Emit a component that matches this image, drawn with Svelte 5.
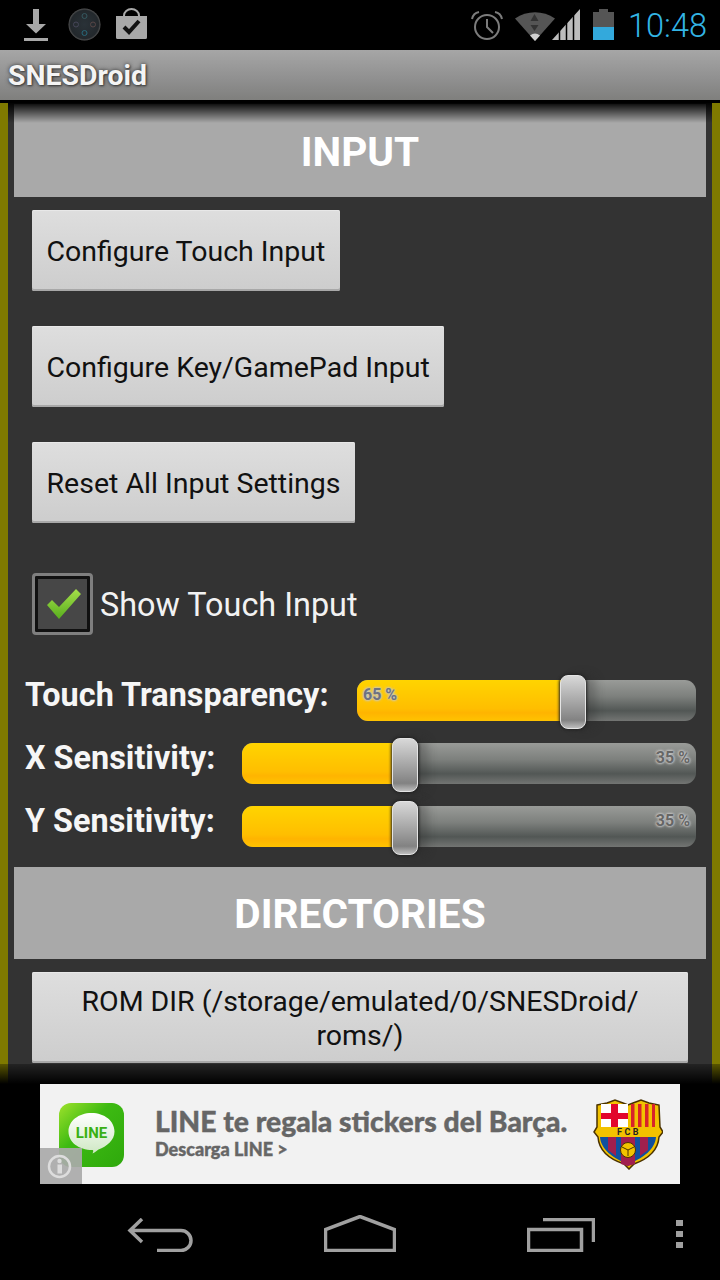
<script>
    const sliders = [
        { label: 'Touch Transparency:', value: 65 },
        { label: 'X Sensitivity:', value: 35 },
        { label: 'Y Sensitivity:', value: 35 }
    ];

    // the thumb travels inside the track, so it stops half a thumb from each end
    const thumbPos = (v) => `calc(13px + (100% - 26px) * ${v / 100})`;
</script>

<div class="screen">
    <header class="status">
        <svg class="ic-download" width="24" height="32" viewBox="0 0 24 32">
            <path d="M9 0h6v15h7l-10 9.500L2 15h7z" fill="#a8a8a8" />
            <rect y="29" width="24" height="3" fill="#a8a8a8" />
        </svg>
        <svg class="ic-pad" width="33" height="33" viewBox="0 0 33 33">
            <defs>
                <radialGradient id="pad" cx="50%" cy="50%" r="50%">
                    <stop offset="0" stop-color="#2a3238" />
                    <stop offset="0.88" stop-color="#23282c" />
                    <stop offset="1" stop-color="#555" />
                </radialGradient>
            </defs>
            <circle cx="16.500" cy="16.500" r="16" fill="url(#pad)" />
            <circle cx="16.500" cy="8" r="2.500" fill="none" stroke="#35585f" />
            <circle cx="16.500" cy="25" r="2.500" fill="none" stroke="#27697a" />
            <circle cx="8" cy="16.500" r="2.500" fill="none" stroke="#464658" />
            <circle cx="25" cy="16.500" r="2.500" fill="none" stroke="#584646" />
        </svg>
        <svg class="ic-bag" width="31" height="31" viewBox="0 0 31 31">
            <path d="M8 9V7.500a7.500 6.500 0 0 1 15 0V9" fill="none" stroke="#a8a8a8" stroke-width="2" />
            <path d="M0 8h31v21.500a1.500 1.500 0 0 1-1.500 1.500h-28A1.500 1.500 0 0 1 0 29.500z" fill="#a8a8a8" />
            <path d="M8 19l5 5 10-11" fill="none" stroke="#111" stroke-width="4" />
        </svg>

        <div class="status-right">
            <svg class="ic-alarm" width="32" height="30" viewBox="0 0 32 30">
                <circle cx="16" cy="17" r="12" fill="none" stroke="#7c7c7c" stroke-width="2" />
                <path d="M16 9v8l6 6" fill="none" stroke="#7c7c7c" stroke-width="2" />
                <path d="M1 9a9 9 0 0 1 7-7M31 9a9 9 0 0 0-7-7" fill="none" stroke="#7c7c7c" stroke-width="2" />
            </svg>
            <svg class="ic-wifi" width="40" height="31" viewBox="0 0 40 31">
                <path d="M0 8.500C12 0 28 0 40 8.500L20 31z" fill="#555" />
                <path d="M15 25.500a8 8 0 0 1 10 0L20 31z" fill="#d0d0d0" />
                <path d="M19.500 4l-4 7h8z" fill="#333" />
                <path d="M15.500 15h8l-4 6z" fill="#333" />
            </svg>
            <svg class="ic-signal" width="29" height="31" viewBox="0 0 29 31">
                <path d="M0 31L28 0v31z" fill="#bdbdbd" />
                <path d="M7.500 18v13M14.500 12v19M21.500 4v27" stroke="#000" stroke-width="1.500" />
            </svg>
            <svg class="ic-battery" width="21" height="31" viewBox="0 0 21 31">
                <rect x="6" width="9" height="3" fill="#555" />
                <rect y="3" width="21" height="15" fill="#555" />
                <rect y="18" width="21" height="13" fill="#33a9dc" />
            </svg>
            <span class="clock">10:48</span>
        </div>
    </header>

    <div class="actionbar">SNESDroid</div>

    <main class="content">
        <div class="panel">
            <h2 class="section first">INPUT</h2>

            <div class="buttons">
                <button>Configure Touch Input</button>
                <button>Configure Key/GamePad Input</button>
                <button>Reset All Input Settings</button>
            </div>

            <label class="check">
                <span class="box">
                    <svg width="38" height="34" viewBox="0 0 38 34">
                        <defs>
                            <linearGradient id="tick" x1="0" y1="0" x2="0" y2="1">
                                <stop offset="0" stop-color="#a6e04a" />
                                <stop offset="1" stop-color="#58ae1e" />
                            </linearGradient>
                        </defs>
                        <path d="M2 18l5-5 7 7L31 2l5 5-22 25z" fill="url(#tick)" />
                    </svg>
                </span>
                <span class="check-text">Show Touch Input</span>
            </label>

            <div class="sliders">
                {#each sliders as s, i}
                    <div class="row">
                        <span class="label">{s.label}</span>
                        <div class="track">
                            <div class="fill" style="width: {thumbPos(s.value)}"></div>
                            <span class="pct" class:pct-left={i === 0}>{s.value} %</span>
                            <div class="thumb" style="left: {thumbPos(s.value)}"></div>
                        </div>
                    </div>
                {/each}
            </div>

            <h2 class="section">DIRECTORIES</h2>

            <div class="buttons">
                <button class="wide">ROM DIR (/storage/emulated/0/SNESDroid/<br />roms/)</button>
            </div>
        </div>
        <div class="shadow"></div>
        <div class="fade"></div>
    </main>

    <aside class="ad">
        <svg class="line-logo" width="65" height="64" viewBox="0 0 65 64">
            <defs>
                <linearGradient id="lineBg" x1="0" y1="0" x2="1" y2="1">
                    <stop offset="0" stop-color="#9fe22c" />
                    <stop offset="0.4" stop-color="#3dba12" />
                    <stop offset="1" stop-color="#2ea80c" />
                </linearGradient>
                <linearGradient id="bubble" x1="0" y1="0" x2="0" y2="1">
                    <stop offset="0" stop-color="#fff" />
                    <stop offset="1" stop-color="#cfe8c4" />
                </linearGradient>
            </defs>
            <rect width="65" height="64" rx="12" fill="url(#lineBg)" />
            <path d="M32.500 10c13 0 23 8 23 18.500 0 9-8 15-16 18-2 1-3 3-6 4 1-2 1-3.500 0-3.500C19.500 47 9.500 39 9.500 28.500 9.500 18 19.500 10 32.500 10z" fill="url(#bubble)" />
            <text x="32.500" y="35" text-anchor="middle" class="line-word">LINE</text>
        </svg>
        <div class="ad-copy">
            <div class="ad-title">LINE te regala stickers del Barça.</div>
            <div class="ad-sub">Descarga LINE &gt;</div>
        </div>
        <svg class="crest" width="70" height="71" viewBox="0 0 70 71">
            <path d="M4 6l10-2 8-3 8 3 5 2 5-2 8-3 8 3 10 2 1 22 3 5-4 5c-1 15-14 23-25 27l-5 5-5-5C19 61 6 53 5 38l-4-5 3-5z" fill="#f2c200" stroke="#4a3200" stroke-width="1.500" />
            <rect x="8" y="5" width="27" height="23" fill="#fff" />
            <path d="M18 5h7v9h10v6H25v8h-7v-8H8v-6h10z" fill="#e2062c" />
            <path d="M38 5h3.500v23H38zM45 5h3.500v23H45zM52 5h3.500v23H52zM59 5h3v23h-3z" fill="#d8232a" />
            <text x="36" y="36" text-anchor="middle" class="fcb">FCB</text>
            <path d="M7 38h56c-1 13-14 21-23 25l-5 4-5-4C21 59 8 51 7 38z" fill="#11509e" />
            <path d="M15 38h8v19l-8-6zM28 38h14v27l-7 2-7-2zM47 38h8v13l-8 6z" fill="#a01f4e" />
            <circle cx="35" cy="51" r="7.500" fill="#f2c200" stroke="#4a3200" />
            <path d="M29 48l6 3 6-3M35 51v6" stroke="#4a3200" fill="none" />
        </svg>
        <div class="info">
            <svg width="25" height="25" viewBox="0 0 25 25">
                <circle cx="12.500" cy="12.500" r="10.500" fill="none" stroke="#ddd" stroke-width="2.500" />
                <rect x="10.500" y="10.500" width="4.500" height="9" fill="#ddd" />
                <circle cx="12.500" cy="7" r="2.200" fill="#ddd" />
            </svg>
        </div>
    </aside>

    <nav class="nav">
        <svg class="drop" width="66" height="34" viewBox="0 0 66 34">
            <path d="M15 1L3 12.500 15 24M3 12.500h51a10 10 0 0 1 0 20H30" fill="none" stroke="#a0a0a0" stroke-width="3.500" />
        </svg>
        <svg width="72" height="37" viewBox="0 0 72 37">
            <path d="M1.500 35.500V14.500L36 1.500l34.500 13v21z" fill="none" stroke="#a0a0a0" stroke-width="3.500" />
        </svg>
        <svg class="drop" width="68" height="34" viewBox="0 0 68 34">
            <rect x="1.500" y="11.500" width="53" height="21" fill="none" stroke="#a0a0a0" stroke-width="3.500" />
            <path d="M16 1.500h50.500V24" fill="none" stroke="#a0a0a0" stroke-width="3.500" />
        </svg>
        <svg class="menu" width="7" height="28" viewBox="0 0 7 28">
            <rect width="7" height="6" fill="#a0a0a0" />
            <rect y="11" width="7" height="6" fill="#a0a0a0" />
            <rect y="22" width="7" height="6" fill="#a0a0a0" />
        </svg>
    </nav>
</div>

<style>
    :global(body) {
        background: #000;
    }

    .screen {
        width: 720px;
        height: 1280px;
        display: flex;
        flex-direction: column;
        overflow: hidden;
        background: #000;
        font-family: Roboto, "Liberation Sans", sans-serif;
    }

    /* status bar */
    .status {
        height: 50px;
        flex: none;
        display: flex;
        align-items: flex-start;
        padding: 0 13px 0 24px;
        box-sizing: border-box;
    }

    .ic-download { margin-top: 9px; }
    .ic-pad { margin: 8px 0 0 20px; }
    .ic-bag { margin: 8px 0 0 15px; }

    .status-right {
        margin-left: auto;
        display: flex;
        align-items: flex-start;
    }

    .ic-alarm { margin-top: 10px; }
    .ic-wifi { margin: 10px 0 0 12px; }
    .ic-signal { margin: 9px 0 0 -3px; }
    .ic-battery { margin: 9px 0 0 12px; }

    .clock {
        margin-left: 14px;
        margin-top: 6px;
        font-size: 32.500px;
        line-height: 40px;
        font-weight: 300;
        color: #33b5e5;
    }

    /* action bar */
    .actionbar {
        height: 50px;
        flex: none;
        box-sizing: border-box;
        padding-left: 8px;
        background: linear-gradient(#a6a6a6, #8f8f8f 60%, #7f7f7d);
        color: #f4f4f4;
        font-size: 28.400px;
        font-weight: 700;
        line-height: 51px;
        text-shadow: 0 0 4px #333, 1px 1px 2px #444;
    }

    /* scrolling content */
    .content {
        position: relative;
        flex: none;
        height: 981px;
        margin-top: 3px;
        padding: 0 8px;
        background: #7f7a00;
        overflow: hidden;
    }

    .panel {
        height: 100%;
        padding: 1px 6px 0;
        box-sizing: border-box;
        background: #333;
    }

    .shadow {
        position: absolute;
        left: 8px;
        right: 8px;
        top: 0;
        height: 20px;
        background: linear-gradient(rgba(0, 0, 0, 0.95), rgba(0, 0, 0, 0));
    }

    .fade {
        position: absolute;
        left: 0;
        right: 0;
        bottom: 0;
        height: 20px;
        background: linear-gradient(rgba(0, 0, 0, 0.3), #000);
    }

    .section {
        margin: 0;
        height: 93px;
        background: #a9a9a9;
        color: #fff;
        font-size: 40.600px;
        line-height: 97px;
        font-weight: 700;
        text-align: center;
    }

    .section:not(.first) {
        height: 92px;
        line-height: 94px;
        margin-top: 20px;
    }

    .buttons {
        display: flex;
        flex-direction: column;
        align-items: flex-start;
        gap: 35px;
        margin: 13px 0 0 18px;
    }

    button {
        height: 81px;
        padding: 2px 14.500px 0;
        border: none;
        border-radius: 2px;
        background: linear-gradient(#dedede, #cdcdcd);
        box-shadow: inset 0 -2px 0 #a8a8a8, inset 0 1px 0 #e8e8e8;
        color: #111;
        font-family: inherit;
        font-size: 28.500px;
        line-height: 34px;
    }

    button.wide {
        width: 656px;
        height: 91px;
    }

    .check {
        display: flex;
        align-items: center;
        gap: 7px;
        margin: 50px 0 0 18px;
        color: #f2f2f2;
        font-size: 32.400px;
    }

    .check-text {
        padding-top: 1px;
    }

    .box {
        width: 61px;
        height: 62px;
        box-sizing: border-box;
        display: flex;
        align-items: center;
        justify-content: center;
        padding-left: 2px;
        border: 3px solid #7f7f7f;
        border-radius: 4px;
        background: #474747;
        box-shadow: inset 0 0 0 3px #111;
    }

    .sliders {
        display: flex;
        flex-direction: column;
        gap: 22px;
        margin: 45px 10px 0 11px;
    }

    .row {
        display: flex;
        align-items: center;
        gap: 28px;
        height: 41px;
    }

    .label {
        width: 304px;
        color: #f6f6f6;
        font-size: 32.400px;
        font-weight: 700;
        white-space: nowrap;
        position: relative;
        top: -6px;
    }

    .row:not(:first-child) .label {
        width: 189px;
    }

    .track {
        position: relative;
        flex: 1;
        height: 41px;
        border-radius: 11px;
        background: linear-gradient(#999b98, #7d807d 40%, #525755 75%, #737573);
    }

    .fill {
        height: 100%;
        border-radius: 11px 0 0 11px;
        background: linear-gradient(#ffd400, #ffbe00 70%, #ffb400 80%, #ffc300);
    }

    .thumb {
        position: absolute;
        top: -5px;
        width: 26px;
        height: 54px;
        margin-left: -13px;
        box-sizing: border-box;
        border: 1px solid #e4e4e4;
        border-radius: 8px;
        background: linear-gradient(#d8d8d8, #b0b0b0 40%, #828282 85%, #bdbdbd);
        box-shadow: 0 0 3px 1px #222, 10px 0 10px rgba(40, 40, 40, 0.3);
    }

    .pct {
        position: absolute;
        top: 6px;
        right: 6px;
        color: #666;
        font-size: 16px;
        font-weight: 700;
        line-height: 17px;
        text-shadow: 0 0 2px #c8c8c8, 0 0 3px #c8c8c8, 0 0 3px #c8c8c8;
    }

    .pct-left {
        right: auto;
        left: 6px;
        color: #6d7280;
    }

    /* ad banner */
    .ad {
        position: relative;
        flex: none;
        height: 100px;
        margin: 0 40px;
        padding: 0 17px 0 19px;
        box-sizing: border-box;
        display: flex;
        align-items: center;
        background: #f2f2f2;
        color: #666;
    }

    .line-logo { margin-top: 1px; }

    .line-word {
        font: 700 15px Roboto, sans-serif;
        fill: #39b014;
    }

    .ad-copy {
        margin-left: 31px;
        flex: 1;
        font-family: Lato, sans-serif;
        font-weight: 900;
        -webkit-text-stroke: 0.4px #666;
    }

    .ad-title {
        font-size: 28.300px;
        line-height: 30px;
        margin-top: -2px;
        white-space: nowrap;
    }

    .ad-sub {
        font-size: 18px;
        line-height: 24px;
        margin-top: 1px;
    }

    .fcb {
        font: 700 9px Roboto, sans-serif;
        letter-spacing: 2.500px;
        fill: #222;
    }

    .info {
        position: absolute;
        left: 0;
        bottom: 0;
        width: 42px;
        height: 36px;
        display: flex;
        align-items: center;
        justify-content: center;
        padding-right: 4px;
        box-sizing: border-box;
        background: rgba(170, 170, 170, 0.92);
    }

    /* soft keys */
    .nav {
        flex: none;
        display: flex;
        align-items: flex-start;
        gap: 131px;
        padding: 31px 0 0 127px;
    }

    .drop {
        margin-top: 3px;
    }

    .menu {
        margin: 5px 0 0 -50px;
    }
</style>
